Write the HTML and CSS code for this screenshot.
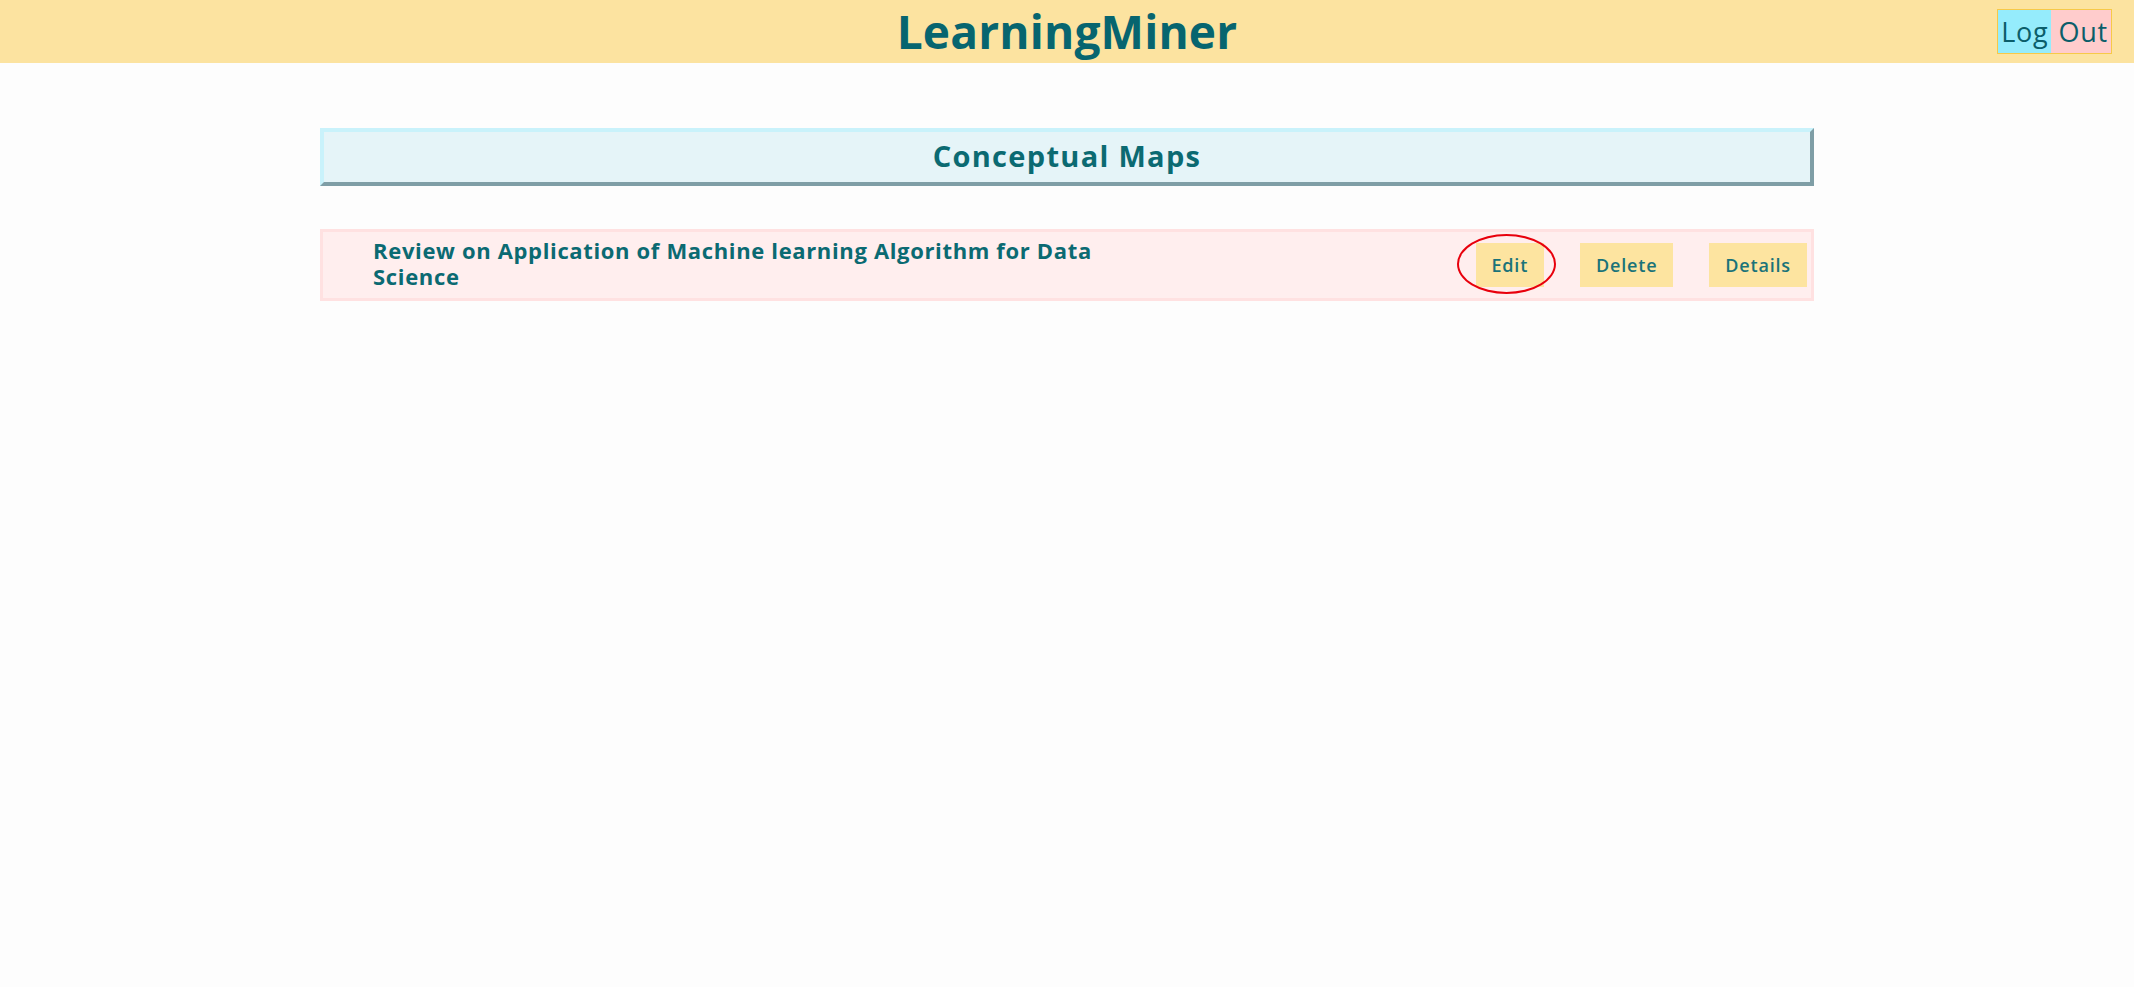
FILE: index.html
```html
<!DOCTYPE html>
<html lang="en">
<head>
<meta charset="utf-8">
<title>LearningMiner</title>
<link rel="stylesheet" href="styles.css">
</head>
<body>
<header class="topbar">
  <div class="topbar-side"></div>
  <h1 class="brand">LearningMiner</h1>
  <div class="topbar-side topbar-right">
    <button class="logout"><span class="logout-log">Log</span><span class="logout-out">&nbsp;Out</span></button>
  </div>
</header>
<main class="content">
  <h2 class="section-title">Conceptual Maps</h2>
  <ul class="map-list">
    <li class="map-row">
      <div class="map-name">Review on Application of Machine learning Algorithm for Data Science</div>
      <div class="map-actions">
        <span class="action-wrap">
          <button class="action">Edit</button>
          <span class="highlight-ring"></span>
        </span>
        <button class="action">Delete</button>
        <button class="action">Details</button>
      </div>
    </li>
  </ul>
</main>
</body>
</html>
```
FILE: styles.css
```css
html, body {
  margin: 0;
  padding: 0;
}
body {
  background: #fdfdfd;
  font-family: "Open Sans", "Liberation Sans", sans-serif;
  color: #0b6a72;
  min-height: 987px;
}
.topbar {
  height: 63px;
  background: #fce3a0;
  display: grid;
  grid-template-columns: 1fr auto 1fr;
  align-items: center;
  box-sizing: border-box;
  padding: 0 22px;
}
.brand {
  margin: 0;
  font-size: 46px;
  font-weight: 700;
  color: #07656f;
  letter-spacing: 0.2px;
  line-height: 63px;
}
.topbar-right {
  display: flex;
  justify-content: flex-end;
}
.logout {
  display: flex;
  padding: 0;
  border: 1px solid #f7c948;
  background: #ffcccc;
  font-family: "Open Sans", "Liberation Sans", sans-serif;
  font-size: 27px;
  letter-spacing: 0.8px;
  color: #0b5e6a;
  height: 45px;
  align-items: stretch;
  cursor: pointer;
}
.logout span {
  display: flex;
  align-items: center;
  line-height: 1;
}
.logout-log {
  background: #95ecfc;
  padding: 0 2px 0 3px;
}
.logout-out {
  background: #ffcccc;
  padding: 0 3px 0 0;
}
.content {
  width: 70%;
  margin: 65px auto 0;
}
.section-title {
  margin: 0;
  box-sizing: border-box;
  height: 58px;
  padding-bottom: 3px;
  display: flex;
  align-items: center;
  justify-content: center;
  background: #e5f4f8;
  border-style: solid;
  border-width: 4px;
  border-color: #c9f2fb #7f9ea6 #7f9ea6 #c9f2fb;
  font-size: 29px;
  letter-spacing: 1.3px;
  font-weight: 700;
  color: #0b6a72;
}
.map-list {
  list-style: none;
  margin: 43px 0 0;
  padding: 0;
}
.map-row {
  box-sizing: border-box;
  height: 72px;
  display: flex;
  align-items: center;
  justify-content: space-between;
  background: #ffeeee;
  border: 3px solid #ffe1e1;
  padding: 0 4px 0 50px;
}
.map-name {
  width: 780px;
  padding-bottom: 5px;
  font-size: 22px;
  letter-spacing: 0.65px;
  font-weight: 700;
  line-height: 26px;
  color: #0b6a72;
}
.map-actions {
  display: flex;
  align-items: center;
  gap: 36px;
}
.action-wrap {
  position: relative;
  display: flex;
}
.action {
  height: 44px;
  box-sizing: border-box;
  padding: 0 15px;
  border: 1px solid #fde4a0;
  background: #fde4a0;
  font-family: "Open Sans", "Liberation Sans", sans-serif;
  font-size: 18px;
  letter-spacing: 0.8px;
  font-weight: 600;
  color: #1a7379;
  cursor: pointer;
}
.highlight-ring {
  position: absolute;
  left: -19px;
  top: -9px;
  width: 99px;
  height: 60px;
  box-sizing: border-box;
  border: 2px solid #e8000c;
  border-radius: 50%;
  pointer-events: none;
}
```
